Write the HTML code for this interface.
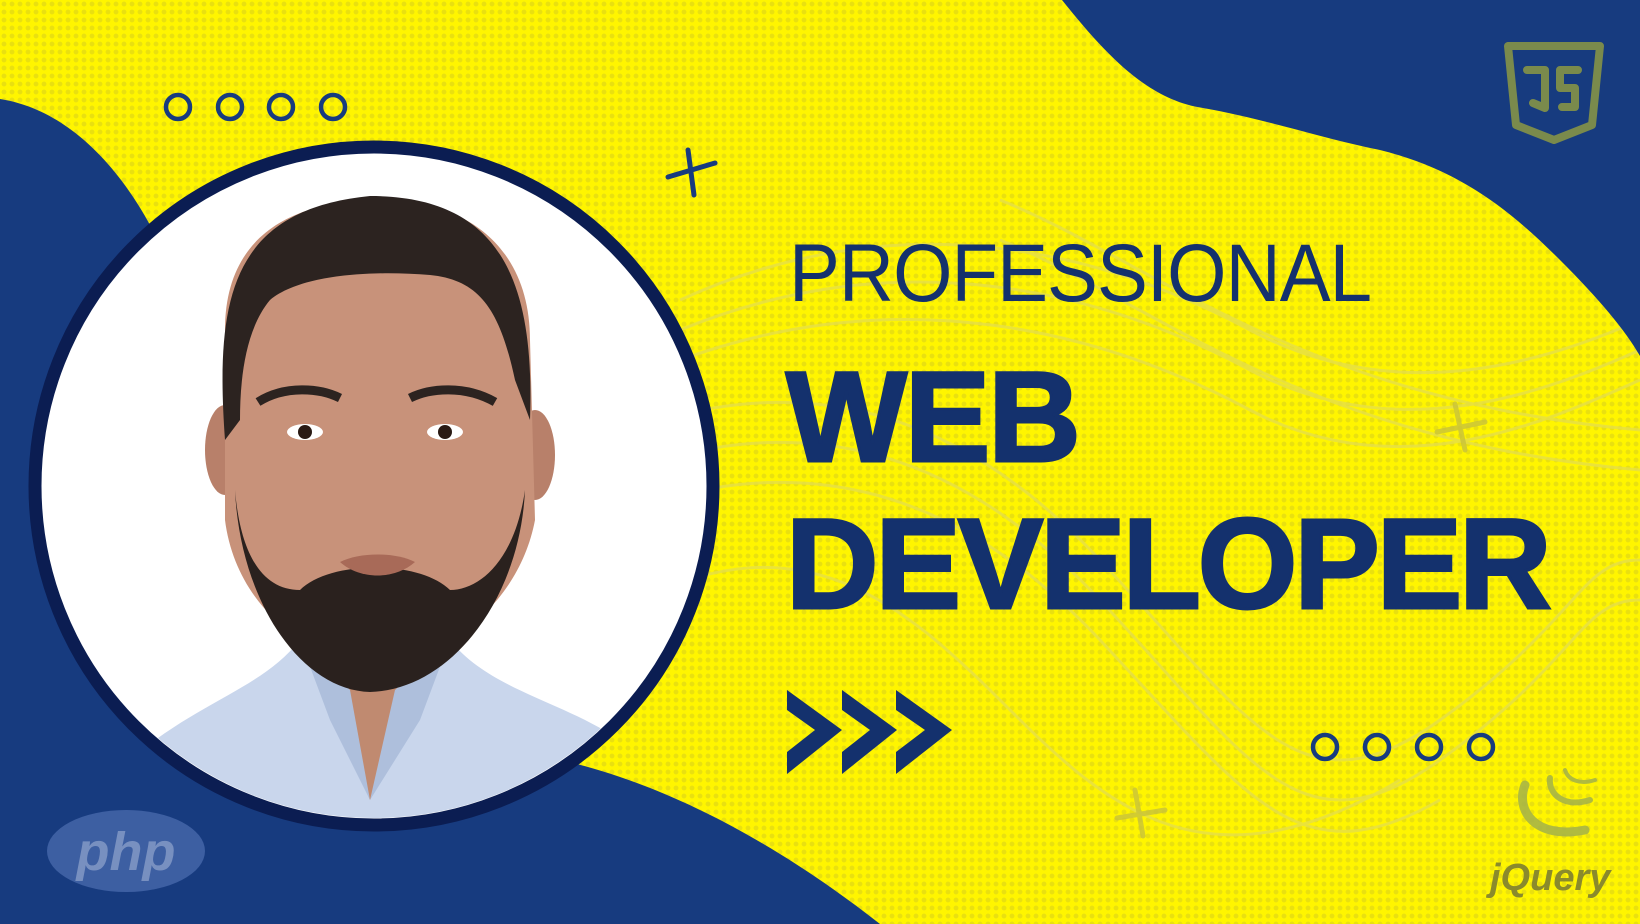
<!DOCTYPE html>
<html><head><meta charset="utf-8"><style>
html,body{margin:0;padding:0}
body{width:1640px;height:924px;overflow:hidden;position:relative;background:#fff500;font-family:"Liberation Sans",sans-serif}
.dots{position:absolute;inset:0;background-image:radial-gradient(circle,#e9e010 2.2px,transparent 2.6px);background-size:8px 8px}
.t{position:absolute;color:#14316d;white-space:nowrap;transform-origin:0 0}
</style></head><body>
<div class="dots"></div>
<svg width="1640" height="924" style="position:absolute;left:0;top:0">
  <g fill="none" stroke="#e6df4a" stroke-width="3" opacity="0.8">
    <path d="M680 300 C900 200 1100 250 1250 330 S1550 360 1640 320"/>
    <path d="M680 330 C900 240 1100 290 1250 370 S1550 390 1640 350"/>
    <path d="M680 360 C900 280 1100 330 1250 410 S1550 420 1640 380"/>
    <path d="M660 420 C800 380 950 400 1100 560 S1300 820 1440 720 S1580 560 1640 560"/>
    <path d="M660 460 C800 420 950 440 1100 600 S1300 860 1440 760 S1580 600 1640 600"/>
    <path d="M660 500 C800 460 950 480 1100 640 S1300 880 1440 800"/>
    <path d="M640 600 C800 520 900 600 1000 700 S1200 900 1400 780"/>
    <path d="M1000 200 C1150 260 1300 400 1640 430"/>
    <path d="M1000 240 C1150 300 1300 440 1640 470"/>
  </g>
  <path d="M1062 0 C1110 60 1150 100 1203 108 C1270 120 1320 138 1380 150 C1460 170 1510 210 1560 260 C1600 300 1625 330 1640 356 L1640 0 Z" fill="#173b7f"/>
  <path d="M0 99 C70 110 120 170 150 225 L150 924 L0 924 Z" fill="#173b7f"/>
  <path d="M0 400 L200 400 L200 924 L0 924 Z" fill="#173b7f"/>
  <path d="M100 700 L560 760 C650 780 760 830 880 924 L0 924 L0 700 Z" fill="#173b7f"/>
  <circle cx="374" cy="486" r="339" fill="#fff" stroke="#0b1d52" stroke-width="13"/>
  <clipPath id="c"><circle cx="374" cy="486" r="332"/></clipPath>
  <g clip-path="url(#c)">
    <path d="M130 760 C200 700 260 690 300 640 L450 640 C490 690 560 700 620 740 L650 840 L100 840 Z" fill="#c9d6ec"/>
    <path d="M300 640 L370 800 L450 640 L430 610 L320 610 Z" fill="#c08a70"/>
    <path d="M300 640 L330 720 L370 800 L350 690 Z M450 640 L420 720 L370 800 L395 690Z" fill="#aebfdc"/>
    <ellipse cx="225" cy="450" rx="20" ry="45" fill="#b8806a"/>
    <ellipse cx="535" cy="455" rx="20" ry="45" fill="#b8806a"/>
    <path d="M225 330 C225 230 300 200 380 200 C470 200 530 250 530 340 L535 520 C520 600 450 660 375 660 C300 660 235 600 225 520 Z" fill="#c8927a"/>
    <path d="M225 440 C215 300 230 210 370 196 C500 196 535 280 530 420 L515 380 C500 310 480 280 430 275 C370 270 300 275 270 300 C245 330 240 380 240 420 Z" fill="#2c2320"/>
    <path d="M235 490 C240 600 300 690 370 692 C450 690 520 600 525 490 C515 560 480 590 450 590 C420 560 330 560 300 590 C260 590 240 550 235 490 Z" fill="#2a211e"/>
    <ellipse cx="305" cy="432" rx="18" ry="8" fill="#fff"/><circle cx="305" cy="432" r="7" fill="#2a1a14"/>
    <ellipse cx="445" cy="432" rx="18" ry="8" fill="#fff"/><circle cx="445" cy="432" r="7" fill="#2a1a14"/>
    <path d="M258 402 C285 385 320 388 340 398 M410 398 C430 388 465 385 495 402" stroke="#2c2320" stroke-width="9" fill="none"/>
    <path d="M340 562 C360 552 395 552 415 562 C395 580 360 580 340 562Z" fill="#a86a58"/>
  </g>
  <g fill="none" stroke="#173b7f" stroke-width="4.5">
    <circle cx="178" cy="107" r="12"/><circle cx="230" cy="107" r="12"/><circle cx="281" cy="107" r="12"/><circle cx="333" cy="107" r="12"/>
    <circle cx="1325" cy="747" r="12"/><circle cx="1377" cy="747" r="12"/><circle cx="1429" cy="747" r="12"/><circle cx="1481" cy="747" r="12"/>
  </g>
  <g stroke="#173b7f" stroke-width="5" stroke-linecap="round"><path d="M668 177 L715 163 M688 150 L694 195"/></g>
  <g stroke="#c8c23c" stroke-width="5" stroke-linecap="round" opacity="0.8"><path d="M1437 432 L1485 422 M1455 404 L1465 450"/><path d="M1117 818 L1165 810 M1135 790 L1143 836"/></g>
  <g fill="#14316d">
    <path d="M787 690 L842 730 L787 774 L787 752 L815 730 L787 710 Z"/>
    <path d="M842 690 L897 730 L842 774 L842 752 L870 730 L842 710 Z"/>
    <path d="M896 690 L952 730 L896 774 L896 752 L925 730 L896 710 Z"/>
  </g>
  <path d="M1508 46 L1600 46 L1592 125 L1554 140 L1516 125 Z" fill="none" stroke="#7a8a4c" stroke-width="8" stroke-linejoin="round"/>
  <path d="M1527 70 L1545 70 L1545 108 L1533 103 M1578 70 L1560 70 L1560 88 L1575 88 L1575 107 L1562 107" fill="none" stroke="#7a8a4c" stroke-width="8" stroke-linecap="round" stroke-linejoin="round"/>
  <ellipse cx="126" cy="851" rx="79" ry="41" fill="#3d5fa2"/>
  <text x="126" y="870" text-anchor="middle" font-family="Liberation Sans" font-weight="bold" font-style="italic" font-size="54" fill="#7890c0">php</text>
  <g fill="none" stroke="#a3b24a" stroke-linecap="round" opacity="0.85">
    <path d="M1525 785 C1515 810 1535 840 1585 830" stroke-width="9"/>
    <path d="M1550 778 C1548 795 1565 808 1590 800" stroke-width="6"/>
    <path d="M1565 770 C1568 780 1580 785 1595 780" stroke-width="4"/>
  </g>
  <text x="1490" y="890" font-family="Liberation Sans" font-weight="bold" font-style="italic" font-size="38" fill="#8a8a2c">jQuery</text>
</svg>
<div class="t" style="left:789px;top:224px;font-size:82px;line-height:100px;letter-spacing:-1px;transform:scaleX(0.93)">PROFESSIONAL</div>
<div class="t" style="left:786px;top:343px;font-size:128px;line-height:150px;font-weight:900;letter-spacing:-2px;-webkit-text-stroke:3px #14316d">WEB</div>
<div class="t" style="left:786px;top:490px;font-size:128px;line-height:150px;font-weight:900;letter-spacing:-3px;-webkit-text-stroke:3px #14316d">DEVELOPER</div>
</body></html>
